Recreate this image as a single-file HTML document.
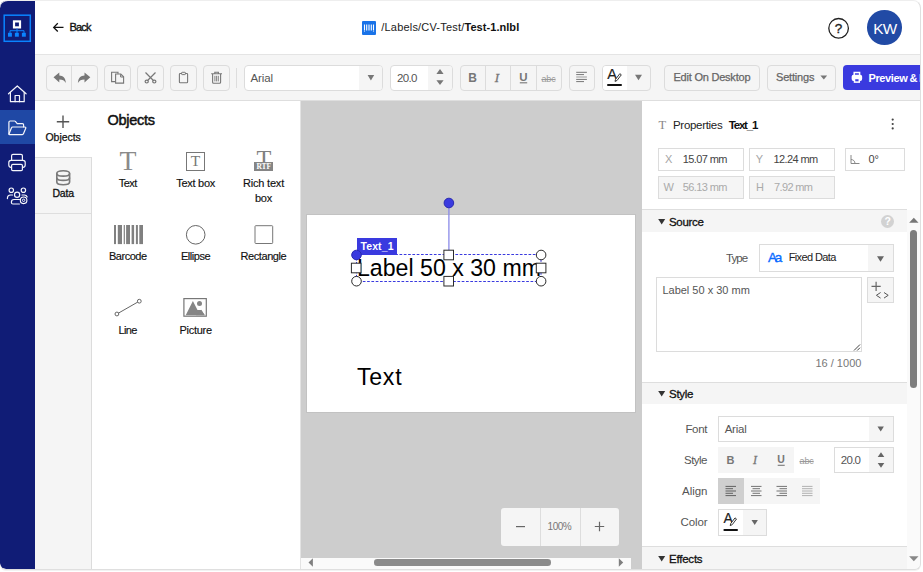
<!DOCTYPE html>
<html><head><meta charset="utf-8"><title>Label Designer</title>
<style>
html,body{margin:0;padding:0;background:#fff;}
body{width:923px;height:572px;position:relative;overflow:hidden;font-family:"Liberation Sans",sans-serif;}
.b{position:absolute;display:block;}
.t{position:absolute;white-space:pre;display:block;font-family:"Liberation Sans",sans-serif;}
.f{font-family:"Liberation Serif",serif;}
</style></head><body>
<div class="b" style="left:0;top:0;width:920px;height:569px;border-radius:8px 8px 6px 6px;overflow:hidden;background:#fff">
<div class="b" style="left:35px;top:54px;width:886px;height:47px;background:#f5f5f5;border-top:1px solid #e4e4e4;border-bottom:1px solid #dedede;box-sizing:border-box;"></div>
<div class="b" style="left:0px;top:1px;width:35px;height:569px;background:#101c76;"></div>
<div class="b" style="left:0px;top:110px;width:35px;height:34px;background:#1f48a5;"></div>
<span class="t" style="left:69.5px;top:22px;font-size:11px;line-height:11px;color:#111;letter-spacing:-0.852px;-webkit-text-stroke:0.35px #111;">Back</span>
<span class="t" style="left:381.3px;top:22px;font-size:11px;line-height:11px;color:#222;letter-spacing:0.187px;">/Labels/CV-Test/</span>
<span class="t" style="left:464.5px;top:22px;font-size:11px;line-height:11px;color:#111;font-weight:700;letter-spacing:0.051px;">Test-1.nlbl</span>
<span class="t" style="left:834.7px;top:22px;font-size:13.5px;line-height:13.5px;color:#222;-webkit-text-stroke:0.3px #222;">?</span>
<div class="b" style="left:867.3px;top:10.1px;width:34.7px;height:34.7px;background:#214aa5;border-radius:50%;"></div>
<span class="t" style="left:873.3px;top:21px;font-size:15.3px;line-height:15.3px;color:#fff;letter-spacing:-0.746px;">KW</span>
<div class="b" style="left:46px;top:65px;width:52px;height:26px;background:#f5f5f5;border:1px solid #dcdcdc;box-sizing:border-box;border-radius:4px;"></div>
<div class="b" style="left:71px;top:66px;width:1px;height:24px;background:#dcdcdc;"></div>
<div class="b" style="left:104px;top:65px;width:27px;height:26px;background:#f5f5f5;border:1px solid #dcdcdc;box-sizing:border-box;border-radius:4px;"></div>
<div class="b" style="left:137px;top:65px;width:27px;height:26px;background:#f5f5f5;border:1px solid #dcdcdc;box-sizing:border-box;border-radius:4px;"></div>
<div class="b" style="left:170px;top:65px;width:27px;height:26px;background:#f5f5f5;border:1px solid #dcdcdc;box-sizing:border-box;border-radius:4px;"></div>
<div class="b" style="left:203px;top:65px;width:27px;height:26px;background:#f5f5f5;border:1px solid #dcdcdc;box-sizing:border-box;border-radius:4px;"></div>
<div class="b" style="left:236px;top:68px;width:1px;height:20px;background:#ddd;"></div>
<div class="b" style="left:244px;top:65px;width:139px;height:26px;background:#fff;border:1px solid #dcdcdc;box-sizing:border-box;border-radius:4px;overflow:hidden;"></div>
<div class="b" style="left:359px;top:66px;width:23px;height:24px;background:#f5f5f5;border-radius:0 3px 3px 0;"></div>
<span class="t" style="left:250.5px;top:73px;font-size:11.5px;line-height:11.5px;color:#555;letter-spacing:-0.126px;">Arial</span>
<div class="b" style="left:390px;top:65px;width:63px;height:26px;background:#fff;border:1px solid #dcdcdc;box-sizing:border-box;border-radius:4px;"></div>
<div class="b" style="left:428px;top:66px;width:24px;height:24px;background:#f5f5f5;border-radius:0 3px 3px 0;"></div>
<span class="t" style="left:397px;top:73px;font-size:11.5px;line-height:11.5px;color:#555;letter-spacing:-0.627px;">20.0</span>
<div class="b" style="left:460px;top:65px;width:102px;height:26px;background:#f5f5f5;border:1px solid #dcdcdc;box-sizing:border-box;border-radius:4px;"></div>
<div class="b" style="left:485px;top:66px;width:1px;height:24px;background:#dcdcdc;"></div>
<div class="b" style="left:510px;top:66px;width:1px;height:24px;background:#dcdcdc;"></div>
<div class="b" style="left:536px;top:66px;width:1px;height:24px;background:#dcdcdc;"></div>
<span class="t" style="left:468.3px;top:72px;font-size:12px;line-height:12px;color:#777;font-weight:700;">B</span>
<span class="t f" style="left:494.8px;top:71px;font-size:13px;line-height:13px;color:#777;font-style:italic;-webkit-text-stroke:0.3px #777;">I</span>
<span class="t" style="left:519.3px;top:72px;font-size:11.5px;line-height:11.5px;color:#777;font-weight:700;">U</span>
<span class="t" style="left:541.4px;top:75px;font-size:9px;line-height:9px;color:#999;letter-spacing:-0.105px;text-decoration:line-through;">abc</span>
<div class="b" style="left:569px;top:65px;width:26px;height:26px;background:#f5f5f5;border:1px solid #dcdcdc;box-sizing:border-box;border-radius:4px;"></div>
<div class="b" style="left:602px;top:65px;width:49px;height:26px;background:#f5f5f5;border:1px solid #dcdcdc;box-sizing:border-box;border-radius:4px;"></div>
<div class="b" style="left:603px;top:66px;width:24px;height:24px;background:#fff;border-radius:3px 0 0 3px;"></div>
<span class="t" style="left:607.3px;top:67px;font-size:14.5px;line-height:14.5px;color:#222;-webkit-text-stroke:0.15px #222;">A</span>
<div class="b" style="left:607.4px;top:84px;width:14.6px;height:2px;background:#111;border-radius:1px;"></div>
<div class="b" style="left:664px;top:65px;width:96px;height:26px;background:#f5f5f5;border:1px solid #dcdcdc;box-sizing:border-box;border-radius:4px;"></div>
<span class="t" style="left:673.5px;top:72px;font-size:11px;line-height:11px;color:#666;letter-spacing:-0.221px;-webkit-text-stroke:0.25px #666;">Edit On Desktop</span>
<div class="b" style="left:767px;top:65px;width:69px;height:26px;background:#f5f5f5;border:1px solid #dcdcdc;box-sizing:border-box;border-radius:4px;"></div>
<span class="t" style="left:776px;top:72px;font-size:11px;line-height:11px;color:#666;letter-spacing:-0.178px;-webkit-text-stroke:0.25px #666;">Settings</span>
<div class="b" style="left:843px;top:65px;width:90px;height:25px;background:#3a3adf;border-radius:4px;"></div>
<span class="t" style="left:868.5px;top:73px;font-size:11px;line-height:11px;color:#fff;font-weight:700;letter-spacing:-0.381px;">Preview</span>
<span class="t" style="left:909.6px;top:73px;font-size:11px;line-height:11px;color:#fff;font-weight:700;">&amp;</span>
<span class="t" style="left:919px;top:73px;font-size:11px;line-height:11px;color:#fff;font-weight:700;">Print</span>
<div class="b" style="left:35px;top:101px;width:57px;height:469px;background:#f5f5f5;border-right:1px solid #dcdcdc;box-sizing:border-box;"></div>
<div class="b" style="left:35px;top:101px;width:57px;height:56px;background:#fff;"></div>
<div class="b" style="left:35px;top:157px;width:56px;height:1px;background:#dedede;"></div>
<div class="b" style="left:35px;top:213px;width:56px;height:1px;background:#dedede;"></div>
<span class="t" style="left:45.5px;top:132px;font-size:10.5px;line-height:10.5px;color:#111;letter-spacing:-0.049px;-webkit-text-stroke:0.25px #111;">Objects</span>
<span class="t" style="left:52.4px;top:188px;font-size:10.5px;line-height:10.5px;color:#111;letter-spacing:-0.193px;-webkit-text-stroke:0.3px #111;">Data</span>
<div class="b" style="left:300px;top:101px;width:1px;height:469px;background:#e3e3e3;"></div>
<span class="t" style="left:107.4px;top:113px;font-size:14.5px;line-height:14.5px;color:#111;letter-spacing:-0.260px;-webkit-text-stroke:0.5px #111;">Objects</span>
<span class="t f" style="left:119.5px;top:147px;font-size:27.8px;line-height:27.8px;color:#8a8a8a;">T</span>
<span class="t" style="left:118.85px;top:178px;font-size:11px;line-height:11px;color:#111;letter-spacing:-0.558px;-webkit-text-stroke:0.15px #111;">Text</span>
<div class="b" style="left:186px;top:152px;width:19px;height:19px;border:1px solid #777;box-sizing:border-box;"></div>
<span class="t f" style="left:190.8px;top:153px;font-size:15.5px;line-height:15.5px;color:#777;">T</span>
<span class="t" style="left:176.3px;top:178px;font-size:11px;line-height:11px;color:#111;letter-spacing:-0.281px;-webkit-text-stroke:0.15px #111;">Text box</span>
<span class="t f" style="left:256.4px;top:148px;font-size:24.3px;line-height:24.3px;color:#808080;">T</span>
<div class="b" style="left:254px;top:162px;width:19px;height:9px;background:#858585;"></div>
<span class="t f" style="left:256.6px;top:163px;font-size:7.5px;line-height:7.5px;color:#fff;font-weight:700;letter-spacing:-0.168px;">RTF</span>
<span class="t" style="left:243px;top:178px;font-size:11px;line-height:11px;color:#111;letter-spacing:-0.199px;-webkit-text-stroke:0.15px #111;">Rich text</span>
<span class="t" style="left:254.95px;top:193px;font-size:11px;line-height:11px;color:#111;letter-spacing:-0.218px;-webkit-text-stroke:0.15px #111;">box</span>
<span class="t" style="left:109px;top:251px;font-size:11px;line-height:11px;color:#111;letter-spacing:-0.495px;-webkit-text-stroke:0.15px #111;">Barcode</span>
<span class="t" style="left:180.95px;top:251px;font-size:11px;line-height:11px;color:#111;letter-spacing:-0.451px;-webkit-text-stroke:0.15px #111;">Ellipse</span>
<span class="t" style="left:240.45px;top:251px;font-size:11px;line-height:11px;color:#111;letter-spacing:-0.404px;-webkit-text-stroke:0.15px #111;">Rectangle</span>
<span class="t" style="left:118.55px;top:325px;font-size:11px;line-height:11px;color:#111;letter-spacing:-0.632px;-webkit-text-stroke:0.15px #111;">Line</span>
<span class="t" style="left:179.55px;top:325px;font-size:11px;line-height:11px;color:#111;letter-spacing:-0.289px;-webkit-text-stroke:0.15px #111;">Picture</span>
<div class="b" style="left:301px;top:101px;width:341px;height:457px;background:#cdcdcd;"></div>
<div class="b" style="left:631px;top:558px;width:11px;height:12px;background:#cdcdcd;"></div>
<div class="b" style="left:307px;top:215px;width:328px;height:197px;background:#fff;box-shadow:0 0 0 1px rgba(0,0,0,.05);"></div>
<div class="b" style="left:357px;top:255px;width:184px;height:26px;overflow:hidden">
<span class="t" style="left:0px;top:2px;font-size:23.15px;line-height:23.15px;color:#000;">Label 50 x 30 mm</span>
</div>
<span class="t" style="left:357px;top:366px;font-size:23.15px;line-height:23.15px;color:#000;letter-spacing:0.714px;">Text</span>
<div class="b" style="left:357px;top:238px;width:40px;height:16.5px;background:#3a3adf;"></div>
<span class="t" style="left:360.5px;top:241px;font-size:10.5px;line-height:10.5px;color:#fff;font-weight:700;letter-spacing:0.102px;">Text_1</span>
<div class="b" style="left:501px;top:508px;width:117.5px;height:38px;background:#f5f5f5;border-radius:3px;"></div>
<div class="b" style="left:540px;top:508px;width:1px;height:38px;background:#ddd;"></div>
<div class="b" style="left:579.5px;top:508px;width:1px;height:38px;background:#ddd;"></div>
<span class="t" style="left:547.6px;top:522px;font-size:10px;line-height:10px;color:#777;letter-spacing:-0.525px;">100%</span>
<div class="b" style="left:301px;top:558px;width:330px;height:11px;background:#fafafa;"></div>
<div class="b" style="left:373.5px;top:559.2px;width:177.5px;height:6.5px;background:#8b8b8b;border-radius:3.3px;"></div>
<div class="b" style="left:642px;top:101px;width:279px;height:469px;background:#fff;"></div>
<span class="t f" style="left:658.6px;top:119px;font-size:12.5px;line-height:12.5px;color:#888;">T</span>
<span class="t" style="left:673px;top:120px;font-size:11.5px;line-height:11.5px;color:#222;letter-spacing:-0.301px;">Properties</span>
<span class="t" style="left:728.8px;top:120px;font-size:11.5px;line-height:11.5px;color:#111;font-weight:700;letter-spacing:-1.217px;">Text_1</span>
<div class="b" style="left:658px;top:148px;width:86px;height:23px;background:#fff;border:1px solid #dcdcdc;box-sizing:border-box;"></div>
<div class="b" style="left:749px;top:148px;width:86px;height:23px;background:#fff;border:1px solid #dcdcdc;box-sizing:border-box;"></div>
<div class="b" style="left:845px;top:148px;width:60px;height:23px;background:#fff;border:1px solid #dcdcdc;box-sizing:border-box;"></div>
<div class="b" style="left:658px;top:176px;width:86px;height:23px;background:#f5f5f5;border:1px solid #dcdcdc;box-sizing:border-box;"></div>
<div class="b" style="left:749px;top:176px;width:86px;height:23px;background:#f5f5f5;border:1px solid #dcdcdc;box-sizing:border-box;"></div>
<span class="t" style="left:665px;top:154px;font-size:11px;line-height:11px;color:#a5a5a5;">X</span>
<span class="t" style="left:682.7px;top:154px;font-size:11px;line-height:11px;color:#444;letter-spacing:-0.587px;">15.07 mm</span>
<span class="t" style="left:755.7px;top:154px;font-size:11px;line-height:11px;color:#a5a5a5;">Y</span>
<span class="t" style="left:773.4px;top:154px;font-size:11px;line-height:11px;color:#444;letter-spacing:-0.587px;">12.24 mm</span>
<span class="t" style="left:868.5px;top:154px;font-size:11px;line-height:11px;color:#444;">0°</span>
<span class="t" style="left:663.5px;top:182px;font-size:11px;line-height:11px;color:#aaa;">W</span>
<span class="t" style="left:682.7px;top:182px;font-size:11px;line-height:11px;color:#aaa;letter-spacing:-0.587px;">56.13 mm</span>
<span class="t" style="left:756px;top:182px;font-size:11px;line-height:11px;color:#aaa;">H</span>
<span class="t" style="left:774px;top:182px;font-size:11px;line-height:11px;color:#aaa;letter-spacing:-0.632px;">7.92 mm</span>
<div class="b" style="left:642px;top:209px;width:265px;height:23px;background:#f5f5f5;border-top:1px solid #dedede;box-sizing:border-box;"></div>
<span class="t" style="left:669px;top:217px;font-size:11.5px;line-height:11.5px;color:#111;letter-spacing:-0.328px;-webkit-text-stroke:0.3px #111;">Source</span>
<div class="b" style="left:880.7px;top:215.2px;width:13px;height:13px;background:#d2d2d2;border-radius:50%;"></div>
<span class="t" style="left:884.4px;top:216px;font-size:10.5px;line-height:10.5px;color:#fff;font-weight:700;">?</span>
<div class="b" style="left:642px;top:382px;width:265px;height:22px;background:#f5f5f5;border-top:1px solid #dedede;box-sizing:border-box;"></div>
<span class="t" style="left:669px;top:389px;font-size:11.5px;line-height:11.5px;color:#111;letter-spacing:-0.292px;-webkit-text-stroke:0.3px #111;">Style</span>
<div class="b" style="left:642px;top:546px;width:265px;height:25px;background:#f5f5f5;border-top:1px solid #dedede;box-sizing:border-box;"></div>
<span class="t" style="left:669px;top:554px;font-size:11.5px;line-height:11.5px;color:#111;letter-spacing:-0.224px;-webkit-text-stroke:0.3px #111;">Effects</span>
<div class="b" style="left:907px;top:210px;width:13px;height:360px;background:#fafafa;"></div>
<div class="b" style="left:910px;top:229.5px;width:7.3px;height:158.5px;background:#7d7d7d;border-radius:3.6px;"></div>
<span class="t" style="left:725.9px;top:253px;font-size:11.5px;line-height:11.5px;color:#555;letter-spacing:-0.877px;">Type</span>
<div class="b" style="left:759px;top:244px;width:135px;height:28px;background:#fff;border:1px solid #dcdcdc;box-sizing:border-box;"></div>
<div class="b" style="left:868px;top:245px;width:25px;height:26px;background:#f5f5f5;"></div>
<span class="t" style="left:768px;top:251px;font-size:13.5px;line-height:13.5px;color:#0a6cff;letter-spacing:-2.213px;-webkit-text-stroke:0.35px #0a6cff;">Aa</span>
<span class="t" style="left:788.7px;top:252px;font-size:11px;line-height:11px;color:#222;letter-spacing:-0.621px;">Fixed Data</span>
<div class="b" style="left:656px;top:277px;width:206px;height:75px;background:#fff;border:1px solid #dcdcdc;box-sizing:border-box;"></div>
<span class="t" style="left:662.4px;top:285px;font-size:11px;line-height:11px;color:#555;">Label 50 x 30 mm</span>
<div class="b" style="left:867px;top:277px;width:27px;height:26px;background:#f5f5f5;border:1px solid #dcdcdc;box-sizing:border-box;"></div>
<span class="t" style="left:815.4px;top:358px;font-size:11px;line-height:11px;color:#777;letter-spacing:0.016px;">16 / 1000</span>
<span class="t" style="left:685.4px;top:424px;font-size:11.5px;line-height:11.5px;color:#555;letter-spacing:-0.304px;">Font</span>
<div class="b" style="left:718px;top:416px;width:176px;height:26px;background:#fff;border:1px solid #dcdcdc;box-sizing:border-box;"></div>
<div class="b" style="left:869px;top:417px;width:24px;height:24px;background:#f5f5f5;"></div>
<span class="t" style="left:724.7px;top:424px;font-size:11.5px;line-height:11.5px;color:#555;letter-spacing:-0.251px;">Arial</span>
<span class="t" style="left:684px;top:455px;font-size:11.5px;line-height:11.5px;color:#555;letter-spacing:-0.517px;">Style</span>
<div class="b" style="left:718px;top:447px;width:76px;height:26px;background:#f5f5f5;"></div>
<span class="t" style="left:726.5px;top:455px;font-size:11px;line-height:11px;color:#777;font-weight:700;">B</span>
<span class="t f" style="left:753px;top:454px;font-size:12px;line-height:12px;color:#777;font-style:italic;-webkit-text-stroke:0.3px #777;">I</span>
<span class="t" style="left:777.3px;top:454px;font-size:10.5px;line-height:10.5px;color:#777;font-weight:700;">U</span>
<span class="t" style="left:799.5px;top:457px;font-size:9px;line-height:9px;color:#999;letter-spacing:-0.105px;text-decoration:line-through;">abc</span>
<div class="b" style="left:834px;top:447px;width:60px;height:26px;background:#fff;border:1px solid #dcdcdc;box-sizing:border-box;"></div>
<div class="b" style="left:869px;top:448px;width:24px;height:24px;background:#f5f5f5;"></div>
<span class="t" style="left:840.8px;top:455px;font-size:11.5px;line-height:11.5px;color:#555;letter-spacing:-0.727px;">20.0</span>
<span class="t" style="left:682px;top:486px;font-size:11.5px;line-height:11.5px;color:#555;letter-spacing:-0.018px;">Align</span>
<div class="b" style="left:718px;top:478px;width:102px;height:26px;background:#f5f5f5;"></div>
<div class="b" style="left:718px;top:478px;width:26px;height:26px;background:#cfcfcf;"></div>
<span class="t" style="left:680.6px;top:517px;font-size:11.5px;line-height:11.5px;color:#555;letter-spacing:-0.145px;">Color</span>
<div class="b" style="left:718px;top:509px;width:49px;height:27px;background:#f5f5f5;border:1px solid #dcdcdc;box-sizing:border-box;"></div>
<div class="b" style="left:719px;top:510px;width:24px;height:25px;background:#fff;"></div>
<span class="t" style="left:723.4px;top:511px;font-size:14px;line-height:14px;color:#222;-webkit-text-stroke:0.15px #222;">A</span>
<svg class="b" style="left:0;top:0" width="923" height="572" viewBox="0 0 923 572"><rect x="4.2" y="15.2" width="26.1" height="26.1" fill="none" stroke="#0a84ff" stroke-width="1.5"/>
<rect x="14" y="21.4" width="6" height="6" fill="#101c76" stroke="#fff" stroke-width="2.2"/>
<path d="M17 28.4v2.300M10 33v-2.300h14V33M17 30.700V33" fill="none" stroke="#0a84ff" stroke-width="1"/>
<rect x="8" y="32.800" width="3.900" height="3.900" fill="#0a84ff"/><rect x="14.900" y="32.800" width="3.900" height="3.900" fill="#0a84ff"/><rect x="21.900" y="32.800" width="3.900" height="3.900" fill="#0a84ff"/>
<g transform="translate(0 80)"><g fill="none" stroke="#f4f5fb" stroke-width="1.2" stroke-linejoin="round" stroke-linecap="round">
<path d="M8.500 13.800L17.300 6l8.800 7.800"/><path d="M10.400 12.300v9.400h13.800v-9.400"/><path d="M15.100 21.700v-6.200h4.400v6.200"/>
<path d="M23.600 47v-2.200a1.200 1.200 0 0 0-1.200-1.200h-5.200l-1.800-2.200a1.200 1.200 0 0 0-.9-.4H10.100a1.200 1.200 0 0 0-1.200 1.200v11.600"/>
<path d="M8.900 54.300l2.600-6.500a1.200 1.200 0 0 1 1.100-.8h12.300a.9.9 0 0 1 .850 1.250l-2.300 5.600a1.200 1.200 0 0 1-1.100.750H9.600a.7.700 0 0 1-.7-.7z"/>
<path d="M11.600 80.300v-4.600a1.400 1.400 0 0 1 1.400-1.400h8a1.400 1.400 0 0 1 1.400 1.400v4.600"/>
<rect x="8.800" y="80.300" width="16.400" height="7" rx="2.200"/>
<rect x="11.600" y="84.300" width="10.800" height="6.300" rx="1.200" fill="#101c76"/>
<circle cx="11.300" cy="110.200" r="2.200"/><circle cx="23.400" cy="110.200" r="2.200"/><circle cx="17.100" cy="114.800" r="2.600"/>
<path d="M7.400 118.600c0-2.300 1.300-3.600 3.200-3.600h2"/><path d="M22 115h2.300c1.500 0 2.500.8 2.900 2"/>
<path d="M19.500 119.500h-5.500c-1.600 0-2.600 1-2.600 2.600v.4c0 .9.600 1.500 1.500 1.500h6.500"/>
</g>
<circle cx="23.600" cy="120.300" r="3.300" fill="#101c76" stroke="#fff" stroke-width="1.100"/><circle cx="23.600" cy="120.300" r="1.200" fill="none" stroke="#fff" stroke-width=".9"/></g>
<path d="M63.500 27.400H53.800M57.800 23.300L53.700 27.400l4.100 4.100" fill="none" stroke="#111" stroke-width="1.300"/>
<rect x="362" y="21" width="14" height="14" rx="1" fill="#1a73e8"/><path d="M364.500 24.500v6M366.700 24.500v6M369 24.500v6M371.300 24.500v6M373.500 24.500v6" stroke="#fff" stroke-width="1.100"/><path d="M364.500 31.200v.8M373.500 31.200v.8" stroke="#fff" stroke-width="1.100" opacity=".7"/>
<circle cx="838.600" cy="28.300" r="9.800" fill="none" stroke="#222" stroke-width="1.300"/>
<path d="M59.300 72.500v3c3.600.100 6.200 2.200 6.600 7.500-1.400-2.600-3.300-3.600-6.600-3.600v3L53.500 77.300z" fill="#777"/>
<path d="M84.500 72.500v3c-3.600.100-6.200 2.200-6.600 7.500 1.400-2.600 3.300-3.600 6.600-3.600v3l5.800-5.100z" fill="#777"/>
<path d="M115 81.600H111.600V72.200h6.400v1.500" fill="none" stroke="#777" stroke-width="1.100"/><path d="M115.600 74h5.200l2.800 2.800v6.300h-8z" fill="#f5f5f5" stroke="#777" stroke-width="1.100"/><path d="M120.600 74.200v2.800h2.800" fill="none" stroke="#777" stroke-width="1"/>
<g fill="none" stroke="#777" stroke-width="1.200"><path d="M145.500 72.500l7.900 8M155.500 72.500l-7.900 8"/><ellipse cx="146.700" cy="81.600" rx="1.600" ry="1.400"/><ellipse cx="154.300" cy="81.600" rx="1.600" ry="1.400"/></g>
<rect x="179.400" y="73.500" width="8.200" height="9.300" rx=".8" fill="none" stroke="#777" stroke-width="1.100"/><rect x="181.600" y="72.300" width="3.800" height="2.300" rx=".6" fill="#f5f5f5" stroke="#777" stroke-width="1"/>
<g fill="none" stroke="#777" stroke-width="1.100"><path d="M211.200 73.700h10.800M214.800 73.500v-1.200h3.600v1.200M212.600 74v8.200a1 1 0 0 0 1 1h6a1 1 0 0 0 1-1V74"/><path d="M214.900 75.800v5.600M216.600 75.800v5.600M218.300 75.800v5.600" stroke-width=".9"/></g>
<path d="M367.600 75h6.600l-3.300 5.400z" fill="#777"/>
<path d="M436.400 73.900l3.600-4.900 3.600 4.900zM436.400 80.200l3.600 4.900 3.600-4.900z" fill="#777"/>
<path d="M519.800 82.800h7.400" stroke="#777" stroke-width="1.100"/>
<path d="M576.200 72.300h10.700M576.200 74.600h7.800M576.200 79.400h10.700M576.200 81.600h7.800" stroke="#777" stroke-width="1"/><path d="M576.200 77h10.700" stroke="#aaa" stroke-width="1.200"/>
<path d="M615 81.400l.5-2 4.300-5.700 1.500 1.100-4.300 5.700z" fill="#fff" stroke="#222" stroke-width=".9"/>
<path d="M635 74.800h7l-3.500 5.500z" fill="#777"/>
<path d="M820.400 75.600h6.800l-3.400 4z" fill="#777"/>
<g fill="none" stroke="#fff" stroke-width="1.500"><path d="M854.200 75.200v-2.600h5.400v2.600"/><rect x="852.400" y="75.400" width="9" height="4.800" rx="1.200" fill="#fff"/><rect x="854.500" y="78.500" width="4.800" height="3.600" fill="#3a3adf"/></g>
<path d="M63 115.500v12.400M56.800 121.700h12.400" stroke="#555" stroke-width="1.400"/>
<g fill="none" stroke="#7a7a7a" stroke-width="1.650"><ellipse cx="63.200" cy="173.400" rx="6.400" ry="2.700"/><path d="M56.800 173.400v8.600c0 1.500 2.900 2.700 6.400 2.700s6.400-1.200 6.400-2.700v-8.600"/><path d="M56.800 177.700c0 1.500 2.900 2.700 6.400 2.700s6.400-1.200 6.400-2.700"/></g>
<rect x="114" y="225" width="2" height="19.100" fill="#808080"/><rect x="117.8" y="225" width="4.2" height="19.100" fill="#808080"/><rect x="123.7" y="225" width="1.2" height="19.100" fill="#808080"/><rect x="126.1" y="225" width="3.9" height="19.100" fill="#808080"/><rect x="131.6" y="225" width="2.5" height="19.100" fill="#808080"/><rect x="135.9" y="225" width="2" height="19.100" fill="#808080"/><rect x="139.3" y="225" width="3.7" height="19.100" fill="#808080"/>
<circle cx="195.700" cy="234.800" r="9.300" fill="none" stroke="#666" stroke-width="1"/>
<rect x="255" y="225.700" width="17.700" height="17.800" rx=".8" fill="none" stroke="#777" stroke-width="1"/>
<g fill="#fff" stroke="#666" stroke-width="1"><path d="M116.900 314L139.300 301.200"/><circle cx="116.900" cy="314" r="1.900"/><circle cx="139.300" cy="301.200" r="1.900"/></g>
<rect x="183.900" y="298.600" width="22.400" height="17.600" fill="#fff" stroke="#777" stroke-width="1.200"/><path d="M185.700 315.200l7.200-14.200 4.600 9 3.700-0.100 3.600 5.300z" fill="#858585"/><path d="M196 315.200l5.200-5.400 3.600 5.400z" fill="#858585"/><circle cx="199.500" cy="303.600" r="2.500" fill="#858585"/>
<rect x="356.500" y="254.500" width="184.500" height="27" fill="none" stroke="#3a3adf" stroke-width="1" stroke-dasharray="2.700 1.600"/>
<path d="M448.900 203v52" stroke="#8a8ae8" stroke-width="1.300"/>
<circle cx="356.5" cy="255" r="4.800" fill="#3a3adf" stroke="#2a2ab0" stroke-width="1"/>
<circle cx="541.1" cy="255" r="4.800" fill="#fff" stroke="#2b2b2b" stroke-width="1"/>
<circle cx="356.5" cy="281.2" r="4.800" fill="#fff" stroke="#2b2b2b" stroke-width="1"/>
<circle cx="541.1" cy="281.2" r="4.800" fill="#fff" stroke="#2b2b2b" stroke-width="1"/>
<rect x="443.9" y="250.2" width="9.600" height="9.600" fill="#fff" stroke="#2b2b2b" stroke-width="1"/>
<rect x="443.9" y="276.4" width="9.600" height="9.600" fill="#fff" stroke="#2b2b2b" stroke-width="1"/>
<rect x="351.4" y="263.2" width="9.600" height="9.600" fill="#fff" stroke="#2b2b2b" stroke-width="1"/>
<rect x="536.3" y="263.2" width="9.600" height="9.600" fill="#fff" stroke="#2b2b2b" stroke-width="1"/>
<circle cx="448.9" cy="203" r="4.800" fill="#3a3adf" stroke="#2a2ab0" stroke-width="1"/>
<path d="M516 526.600h9" stroke="#666" stroke-width="1.200"/>
<path d="M599.500 521.800v9.400M594.800 526.500h9.400" stroke="#666" stroke-width="1.200"/>
<path d="M312.900 558.200v8.600L308.500 562.500z" fill="#7f7f7f"/><path d="M618.800 558.200v8.600l4.400-4.300z" fill="#7f7f7f"/>
<circle cx="892.700" cy="119.600" r="1.100" fill="#444"/><circle cx="892.700" cy="124" r="1.100" fill="#444"/><circle cx="892.700" cy="128.400" r="1.100" fill="#444"/>
<path d="M851 155v8.500h8.500M851 159.500c2.300 0 4 1.700 4 4" fill="none" stroke="#888" stroke-width="1"/>
<path d="M658.200 218.9h7l-3.500 5.700z" fill="#333"/>
<path d="M658.200 390.9h7l-3.500 5.700z" fill="#333"/>
<path d="M658.200 555.9h7l-3.500 5.700z" fill="#333"/>
<path d="M909.100 222.800h9.400L913.800 217.800z" fill="#777"/>
<path d="M909.100 556.200h9.400L913.800 561.200z" fill="#888"/>
<path d="M877 256.300h7l-3.500 5.400z" fill="#666"/>
<path d="M860 344.500l-6 6M860 347.700l-2.800 2.800" stroke="#444" stroke-width="1"/>
<path d="M876.100 281.800v9.200M871.500 286.400h9.200" stroke="#666" stroke-width="1.200" fill="none"/><path d="M880.600 292.500l-4.200 2.800 4.200 2.800M884 292.500l4.200 2.800-4.200 2.800" stroke="#555" stroke-width="1" fill="none"/>
<path d="M877.500 426.500h6.400l-3.200 5z" fill="#666"/>
<path d="M777.700 465.300h7" stroke="#777" stroke-width="1.100"/>
<path d="M877.700 457l3.300-4.800 3.300 4.800zM877.700 463l3.300 4.800 3.300-4.800z" fill="#666"/>
<path d="M725.5 486.4h10.5M725.5 488.7h7.5M725.5 491.0h10.5M725.5 493.3h7.5M725.5 495.6h10.5" stroke="#555" stroke-width="1" opacity=".9"/>
<path d="M751.0 486.4h10.5M752.5 488.7h7.5M751.0 491.0h10.5M752.5 493.3h7.5M751.0 495.6h10.5" stroke="#666" stroke-width="1" opacity=".9"/>
<path d="M776.5 486.4h10.5M779.5 488.7h7.5M776.5 491.0h10.5M779.5 493.3h7.5M776.5 495.6h10.5" stroke="#666" stroke-width="1" opacity=".9"/>
<path d="M802.0 486.4h10.5M802.0 488.7h10.5M802.0 491.0h10.5M802.0 493.3h10.5M802.0 495.6h10.5" stroke="#aaa" stroke-width="1" opacity=".9"/>
<path d="M730.200 525.600l.5-2 4.300-5.700 1.500 1.100-4.300 5.700z" fill="#fff" stroke="#222" stroke-width=".9"/>
<rect x="723.400" y="529" width="14.600" height="2.100" rx="1" fill="#111"/>
<path d="M751.500 520h6.400l-3.200 5z" fill="#666"/></svg>
</div>
<div class="b" style="left:0;top:0;width:921px;height:570px;border-radius:8px 8px 6px 6px;box-sizing:border-box;border:1px solid #dfdfdf;border-left:none;border-top-color:#eee;box-shadow:0 1px 0 #f2f2f2;pointer-events:none"></div>
</body></html>
